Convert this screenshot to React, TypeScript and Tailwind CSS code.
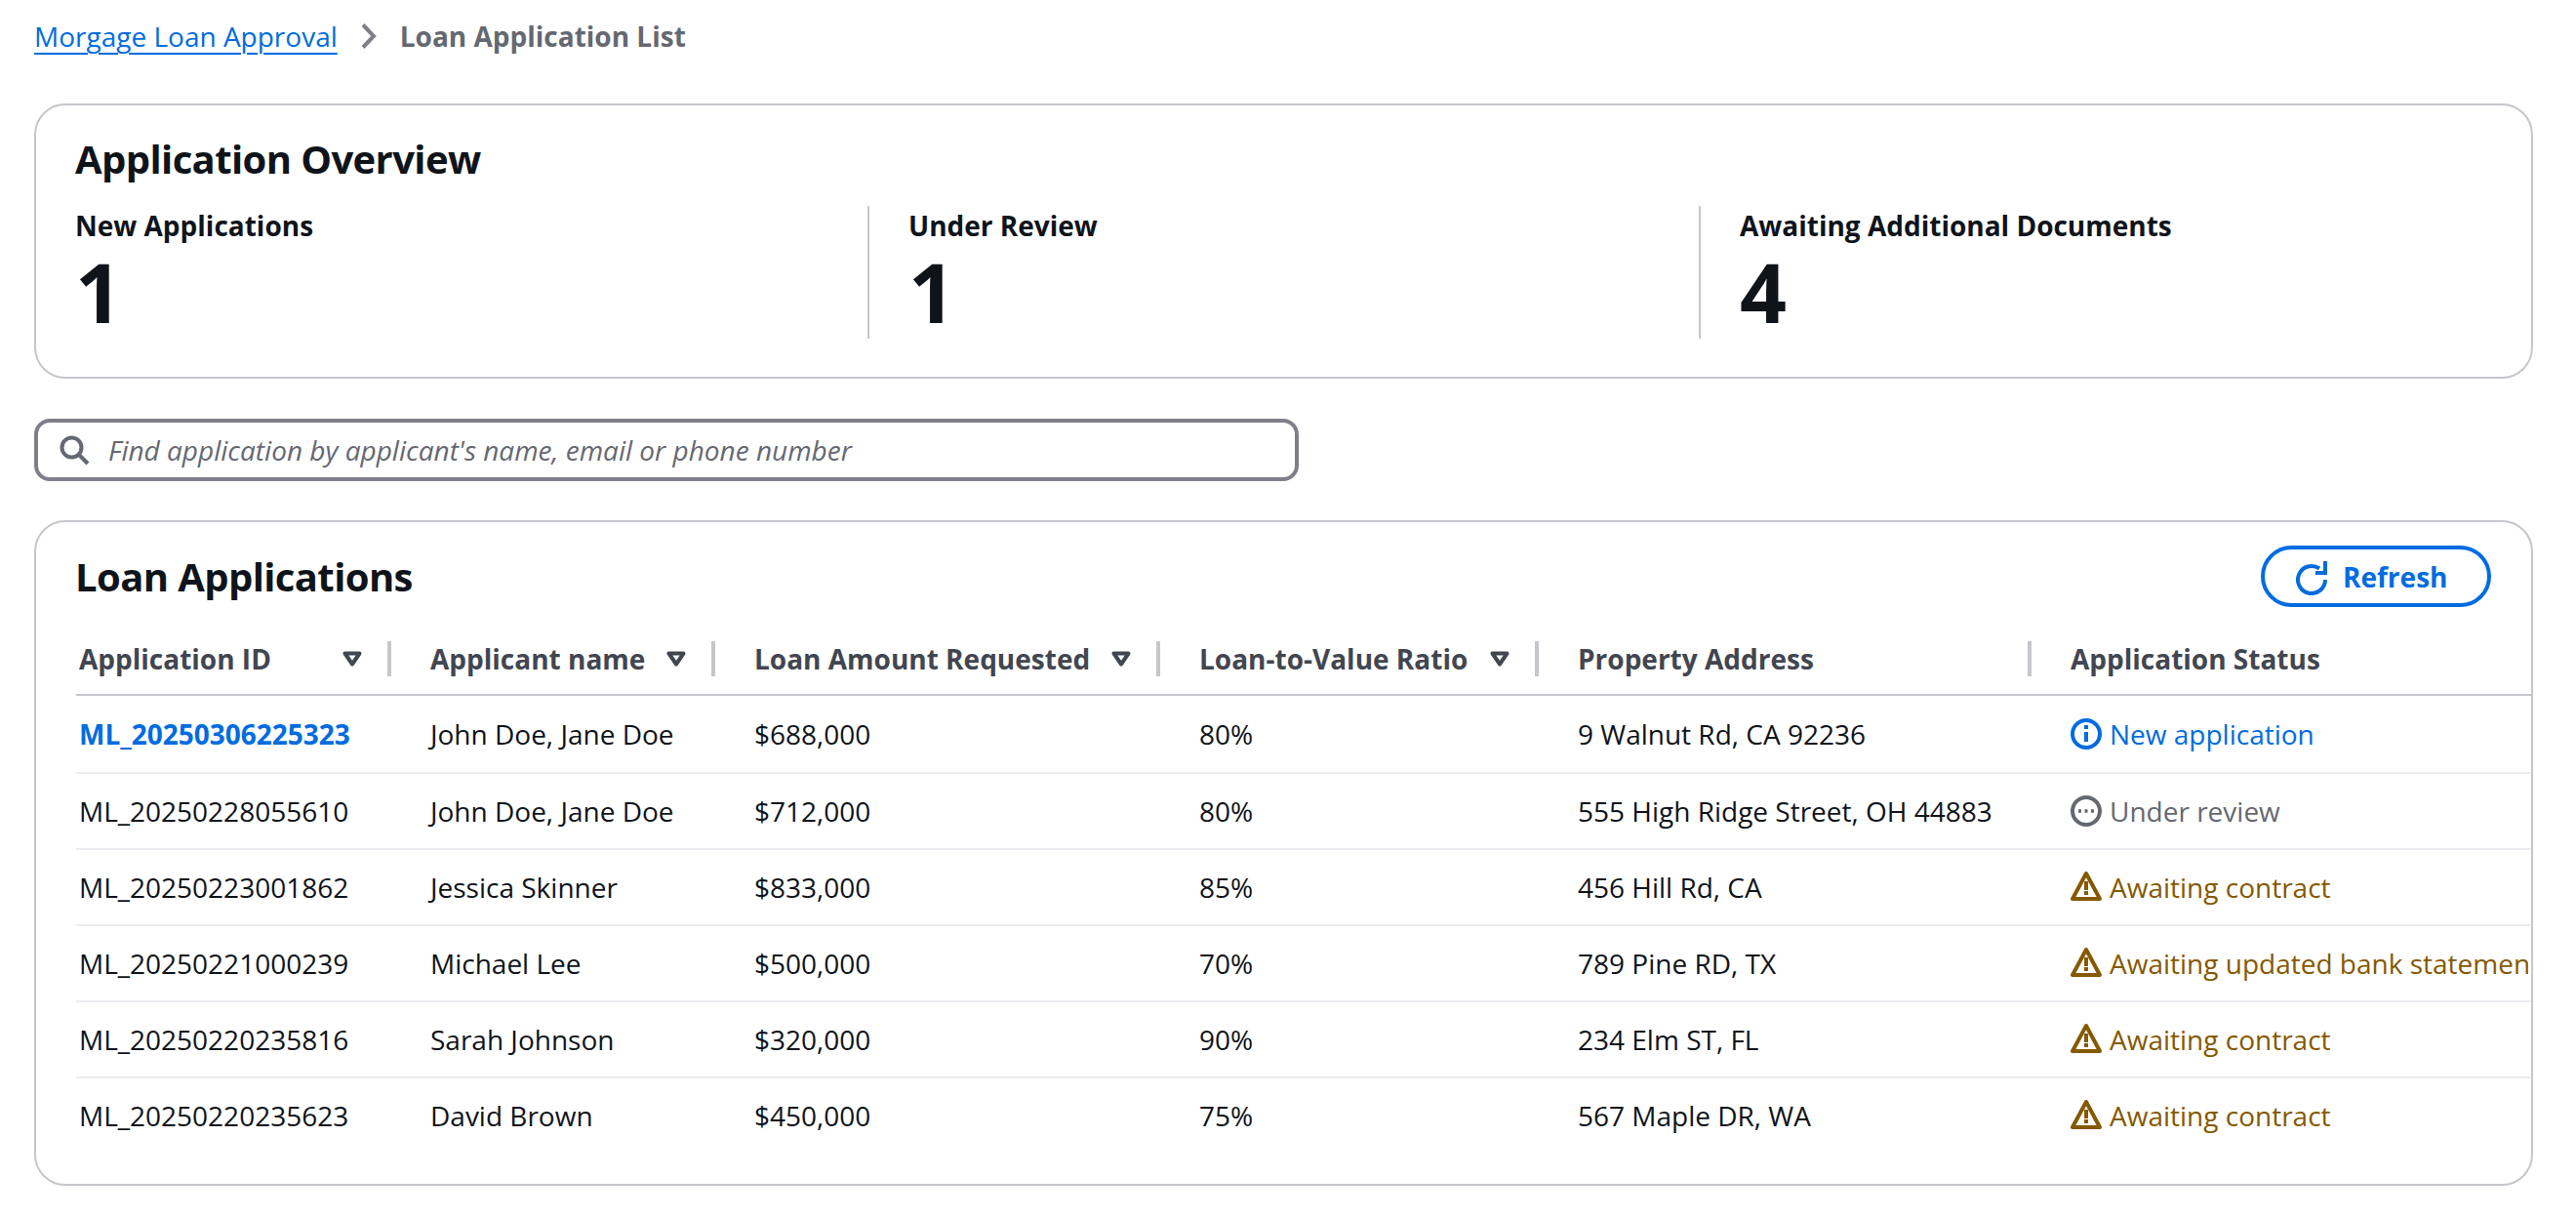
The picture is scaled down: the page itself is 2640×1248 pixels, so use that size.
import { useState } from "react";

const font = { fontFamily: '"Open Sans", sans-serif' };

type Status = "info" | "pending" | "warning";

const columns = [
  { label: "Application ID", width: "w-[323px]", sortable: true, first: true },
  { label: "Applicant name", width: "w-[332px]", sortable: true },
  { label: "Loan Amount Requested", width: "w-[456px]", sortable: true },
  { label: "Loan-to-Value Ratio", width: "w-[388px]", sortable: true },
  { label: "Property Address", width: "w-[505px]", sortable: false },
  { label: "Application Status", width: "w-[512px]", sortable: false, last: true },
];

const rows: { id: string; name: string; amount: string; ltv: string; address: string; status: string; kind: Status }[] = [
  { id: "ML_20250306225323", name: "John Doe, Jane Doe", amount: "$688,000", ltv: "80%", address: "9 Walnut Rd, CA 92236", status: "New application", kind: "info" },
  { id: "ML_20250228055610", name: "John Doe, Jane Doe", amount: "$712,000", ltv: "80%", address: "555 High Ridge Street, OH 44883", status: "Under review", kind: "pending" },
  { id: "ML_20250223001862", name: "Jessica Skinner", amount: "$833,000", ltv: "85%", address: "456 Hill Rd, CA", status: "Awaiting contract", kind: "warning" },
  { id: "ML_20250221000239", name: "Michael Lee", amount: "$500,000", ltv: "70%", address: "789 Pine RD, TX", status: "Awaiting updated bank statements", kind: "warning" },
  { id: "ML_20250220235816", name: "Sarah Johnson", amount: "$320,000", ltv: "90%", address: "234 Elm ST, FL", status: "Awaiting contract", kind: "warning" },
  { id: "ML_20250220235623", name: "David Brown", amount: "$450,000", ltv: "75%", address: "567 Maple DR, WA", status: "Awaiting contract", kind: "warning" },
];

const stats = [
  { label: "New Applications", value: "1" },
  { label: "Under Review", value: "1" },
  { label: "Awaiting Additional Documents", value: "4" },
];

const StatusIcon = ({ kind }: { kind: Status }) => {
  if (kind === "info") {
    return (
      <svg viewBox="0 0 16 16" className="w-8 h-8 shrink-0" fill="none" stroke="currentColor" strokeWidth="2">
        <circle cx="8" cy="8" r="7" />
        <path d="M8 7v5M8 3.500v2" />
      </svg>
    );
  }
  if (kind === "pending") {
    return (
      <svg viewBox="0 0 16 16" className="w-8 h-8 shrink-0" fill="none" stroke="currentColor" strokeWidth="2">
        <circle cx="8" cy="8" r="7" />
        <path d="M4 8h1.500M7.250 8h1.500M10.500 8h1.500" strokeWidth="1.750" />
      </svg>
    );
  }
  return (
    <svg viewBox="0 0 16 16" className="w-8 h-8 shrink-0" fill="none" stroke="currentColor" strokeWidth="2">
      <path d="M8 1 1 14h14z" strokeLinejoin="round" />
      <path d="M8 5v4.500M8 10v2" />
    </svg>
  );
};

const SortIcon = () => (
  <svg viewBox="0 0 20 16" className="w-5 h-4 shrink-0 text-[#424650]" fill="none" stroke="currentColor" strokeWidth="4">
    <path d="M2.500 2.500h15L10 13.500z" strokeLinejoin="round" />
  </svg>
);

const statusColor: Record<Status, string> = {
  info: "text-[#006ce0]",
  pending: "text-[#656871]",
  warning: "text-[#855900]",
};

export default function App() {
  const [query, setQuery] = useState("");

  return (
    <div style={font} className="w-[2640px] h-[1248px] bg-white pl-[35px] text-[28px] leading-10 text-[#0f141a] overflow-hidden">
      <nav className="flex items-center h-10 mt-[18px] -translate-y-px">
        <a href="#" className="text-[#006ce0] underline decoration-2 underline-offset-[6px]">Morgage Loan Approval</a>
        <svg viewBox="0 0 16 26" className="w-4 h-[26px] ml-[24px] mr-[24px] text-[#7f7f8a]" fill="none" stroke="currentColor" strokeWidth="4">
          <path d="M2 1.500 13 13 2 24.500" />
        </svg>
        <span className="font-bold text-[#656871]">Loan Application List</span>
      </nav>

      <section className="mt-[48px] w-[2561px] h-[282px] border-2 border-[#c6c6cd] rounded-[32px] px-10 pt-[31px]">
        <h2 className="text-[40px] leading-[48px] font-bold tracking-[-0.6px]">Application Overview</h2>
        <div className="grid grid-cols-[812px_852px_1fr] mt-6">
          {stats.map((s, i) => (
            <div key={s.label} className={i > 0 ? "h-[136px] border-l-2 border-[#c6c6cd] pl-10" : "h-[136px]"}>
              <div className="font-bold">{s.label}</div>
              <div className="text-[84px] leading-[96px] font-bold">{s.value}</div>
            </div>
          ))}
        </div>
      </section>

      <div className="mt-[41px] w-[1296px] h-[64px] border-4 border-[#7f7f8a] rounded-2xl flex items-center pl-[21px] pr-4">
        <svg viewBox="0 0 16 16" className="w-8 h-8 shrink-0 text-[#656871]" fill="none" stroke="currentColor" strokeWidth="2">
          <circle cx="6.750" cy="6.750" r="5" />
          <path d="M10.500 10.500 15 15" />
        </svg>
        <input
          value={query}
          onChange={(e) => setQuery(e.target.value)}
          placeholder="Find application by applicant's name, email or phone number"
          className="ml-[19px] flex-1 outline-none italic placeholder:text-[#656871] placeholder:opacity-100"
        />
      </div>

      <section className="mt-10 w-[2561px] h-[682px] border-2 border-[#c6c6cd] rounded-[32px] overflow-hidden pl-10">
        <div className="flex items-center justify-between pt-6 pr-[41px]">
          <h2 className="text-[40px] leading-[48px] font-bold tracking-[-0.6px]">Loan Applications</h2>
          <button className="flex items-center w-[236px] h-[63px] pl-8 border-4 border-[#006ce0] rounded-full text-[#006ce0] font-bold">
            <svg viewBox="0 -1.500 16 17.500" className="w-8 h-[35px] mr-4 mt-1 shrink-0" fill="none" stroke="currentColor" strokeWidth="2">
              <path d="M15 8a7 7 0 1 1-3-5.750" />
              <path d="M15 -1.500V4.500H10" />
            </svg>
            Refresh
          </button>
        </div>

        <table className="table-fixed border-collapse w-[2516px] ml-px">
          <thead>
            <tr className="border-b-2 border-[#c6c6cd]">
              {columns.map((c) => (
                <th key={c.label} className={`${c.width} p-0 pt-[35px] pb-[18px] font-bold text-left text-[#424650]`}>
                  <div className={c.first ? "flex items-center h-9 pl-[3px]" : "flex items-center h-9 pl-10"}>
                    <span className="flex-1 whitespace-nowrap">{c.label}</span>
                    {c.sortable && <SortIcon />}
                    {!c.last && <span className={c.sortable ? "w-1 h-9 bg-[#c6c6cd] ml-[26px]" : "w-1 h-9 bg-[#c6c6cd]"} />}
                  </div>
                </th>
              ))}
            </tr>
          </thead>
          <tbody>
            {rows.map((r, i) => (
              <tr key={r.id} className={i === 0 ? "h-[80px] border-b-2 border-[#ebebf0]" : i < rows.length - 1 ? "h-[78px] border-b-2 border-[#ebebf0]" : "h-[76px]"}>
                <td className={i === 0 ? "p-0 pl-[3px] font-bold text-[#006ce0]" : "p-0 pl-[3px]"}>{r.id}</td>
                <td className="p-0 pl-10">{r.name}</td>
                <td className="p-0 pl-10">{r.amount}</td>
                <td className="p-0 pl-10">{r.ltv}</td>
                <td className="p-0 pl-10 whitespace-nowrap">{r.address}</td>
                <td className="p-0 pl-10 pr-[3px]">
                  <div className={`flex items-center gap-[8px] whitespace-nowrap overflow-hidden ${statusColor[r.kind]}`}>
                    <StatusIcon kind={r.kind} />
                    <span>{r.status}</span>
                  </div>
                </td>
              </tr>
            ))}
          </tbody>
        </table>
      </section>
    </div>
  );
}
